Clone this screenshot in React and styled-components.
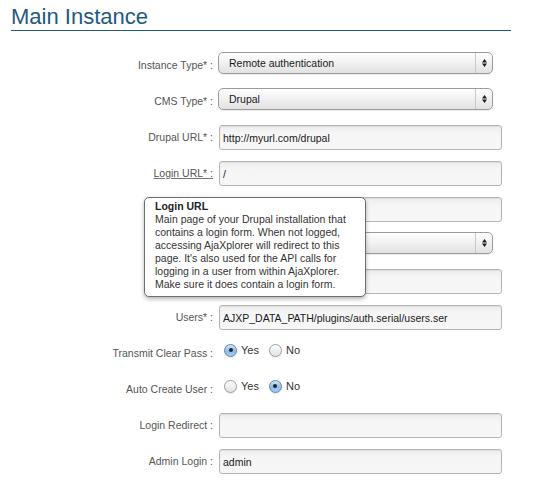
import React from 'react';
import styled, { createGlobalStyle } from 'styled-components';

const GlobalStyle = createGlobalStyle`
  html, body {
    margin: 0;
    padding: 0;
    background: #fff;
  }
  body {
    font-family: "Liberation Sans", Arial, Helvetica, sans-serif;
  }
`;

// the three rows under the tooltip have their labels hidden by it
const rows = [
  { label: 'Instance Type* :', type: 'select', value: 'Remote authentication' },
  { label: 'CMS Type* :', type: 'select', value: 'Drupal' },
  { label: 'Drupal URL* :', type: 'input', value: 'http://myurl.com/drupal' },
  { label: 'Login URL* :', type: 'input', value: '/', help: true },
  { label: '', type: 'input', value: '' },
  { label: '', type: 'select', value: '' },
  { label: '', type: 'input', value: '' },
  { label: 'Users* :', type: 'input', value: 'AJXP_DATA_PATH/plugins/auth.serial/users.ser' },
  { label: 'Transmit Clear Pass :', type: 'radio', value: 'yes' },
  { label: 'Auto Create User :', type: 'radio', value: 'no' },
  { label: 'Login Redirect :', type: 'input', value: '' },
  { label: 'Admin Login :', type: 'input', value: 'admin' },
];

export default function App() {
  return (
    <Page>
      <GlobalStyle />
      <Title>Main Instance</Title>
      <Form>
        {rows.map((row, i) => (
          <Row key={i}>
            <Label help={row.help}>{row.label}</Label>
            {row.type === 'select' && (
              <Select>
                <SelectValue>{row.value}</SelectValue>
                <SelectArrows>
                  <svg width="5" height="8" viewBox="0 0 5 8">
                    <path d="M0 3.4 L2.5 0 L5 3.4Z M0 4.6 L2.5 8 L5 4.6Z" fill="#1e1e1e" />
                  </svg>
                </SelectArrows>
              </Select>
            )}
            {row.type === 'input' && <TextInput readOnly defaultValue={row.value} />}
            {row.type === 'radio' && (
              <RadioGroup>
                <RadioOption>
                  <Radio checked={row.value === 'yes'} />
                  Yes
                </RadioOption>
                <RadioOption>
                  <Radio checked={row.value === 'no'} />
                  No
                </RadioOption>
              </RadioGroup>
            )}
          </Row>
        ))}
      </Form>
      <Tooltip>
        <TooltipTitle>Login URL</TooltipTitle>
        Main page of your Drupal installation that
        <br />
        contains a login form. When not logged,
        <br />
        accessing AjaXplorer will redirect to this
        <br />
        page. It's also used for the API calls for
        <br />
        logging in a user from within AjaXplorer.
        <br />
        Make sure it does contain a login form.
      </Tooltip>
    </Page>
  );
}

const Page = styled.div`
  position: relative;
  width: 541px;
  height: 484px;
  overflow: hidden;
`;

const Title = styled.h1`
  margin: 0 0 0 11px;
  width: 500px;
  padding: 4px 0 0;
  font-size: 22px;
  font-weight: 400;
  line-height: 26px;
  color: #1d5a80;
  border-bottom: 1px solid #1f5a7e;
`;

const Form = styled.div`
  margin-top: 21px;
  display: flex;
  flex-direction: column;
`;

const Row = styled.div`
  display: flex;
  align-items: flex-start;
  height: 36px;
`;

const Label = styled.span`
  width: 213px;
  flex-shrink: 0;
  margin-right: 5px;
  padding-top: 6px;
  text-align: right;
  font-size: 10.5px;
  line-height: 14px;
  color: #555;
  white-space: nowrap;
  text-decoration: ${props => (props.help ? 'underline' : 'none')};
  text-decoration-color: #777;
`;

const Select = styled.div`
  box-sizing: border-box;
  width: 275px;
  height: 22px;
  display: flex;
  align-items: stretch;
  border: 1px solid #9b9b9b;
  border-radius: 5px;
  background: linear-gradient(#fefefe, #f1f1f1 50%, #e2e2e2);
  box-shadow: 0 1px 1px rgba(0, 0, 0, 0.08);
`;

const SelectValue = styled.span`
  flex: 1;
  padding-left: 10px;
  font-size: 10.5px;
  line-height: 20px;
  color: #1a1a1a;
`;

const SelectArrows = styled.span`
  width: 16px;
  display: flex;
  align-items: center;
  justify-content: center;
  border-left: 1px solid #c9c9c9;
`;

const TextInput = styled.input`
  box-sizing: border-box;
  width: 283px;
  height: 25px;
  margin: 1px 0 0 1px;
  padding: 0 3px;
  border: 1px solid #b4b4b4;
  border-radius: 3px;
  background: linear-gradient(#ececec, #f5f5f5 30%, #f7f7f7);
  box-shadow: inset 0 1px 1px rgba(0, 0, 0, 0.06);
  font-family: "Liberation Sans", Arial, Helvetica, sans-serif;
  font-size: 10.5px;
  color: #1a1a1a;
  outline: none;
`;

const RadioGroup = styled.div`
  display: flex;
  align-items: center;
  gap: 10px;
  margin: 3.5px 0 0 6px;
`;

const RadioOption = styled.label`
  display: flex;
  align-items: center;
  gap: 4px;
  font-size: 11px;
  line-height: 13px;
  color: #333;
`;

const Radio = styled.span`
  box-sizing: border-box;
  width: 13px;
  height: 13px;
  border-radius: 50%;
  display: flex;
  align-items: center;
  justify-content: center;
  border: 1px solid ${props => (props.checked ? '#5a86b3' : '#9d9d9d')};
  background: ${props =>
    props.checked
      ? 'linear-gradient(#d3e5f6, #8fbbe6 55%, #a9cdf0)'
      : 'linear-gradient(#ffffff, #f0f0f0 50%, #e2e2e2)'};
  box-shadow: 0 1px 1px rgba(0, 0, 0, 0.1);

  &::after {
    content: '';
    width: 4px;
    height: 4px;
    border-radius: 50%;
    background: #1b2533;
    display: ${props => (props.checked ? 'block' : 'none')};
  }
`;

const Tooltip = styled.div`
  position: absolute;
  left: 144px;
  top: 197px;
  z-index: 2;
  box-sizing: border-box;
  width: 222px;
  height: 100px;
  padding: 2px 8px 5px 10px;
  background: #fff;
  border: 1px solid #6e6e6e;
  border-radius: 5px;
  box-shadow: 0 2px 4px rgba(0, 0, 0, 0.3);
  font-size: 10.5px;
  line-height: 13px;
  color: #333;
  white-space: nowrap;
`;

const TooltipTitle = styled.div`
  font-weight: 700;
  color: #222;
`;
